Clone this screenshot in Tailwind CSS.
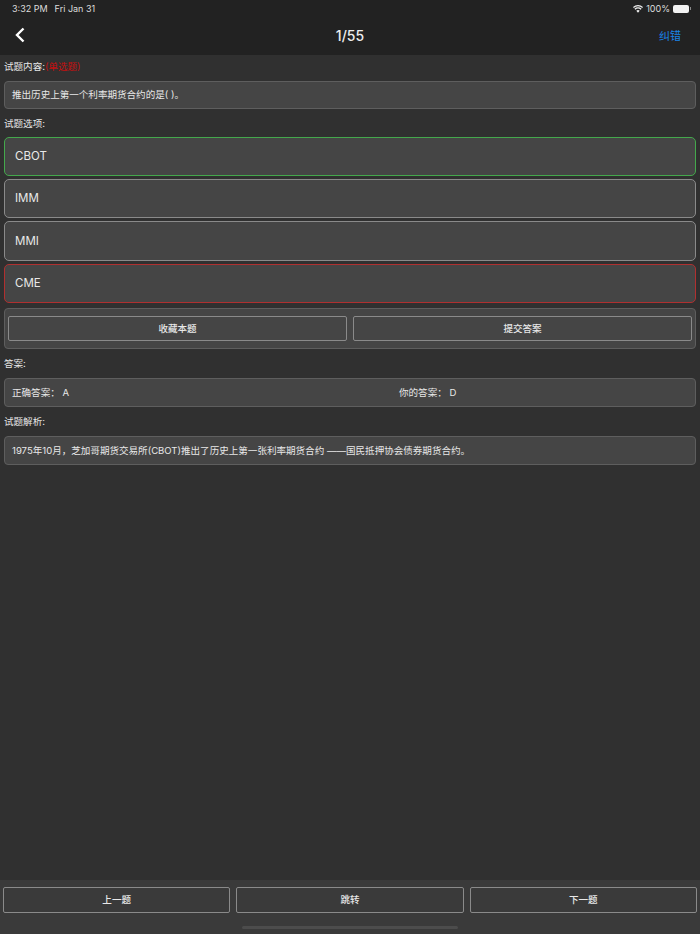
<!DOCTYPE html>
<html lang="zh">
<head>
    <meta charset="UTF-8">
    <meta name="viewport" content="width=device-width, initial-scale=1.0">
    <script src="https://cdn.jsdelivr.net/npm/@tailwindcss/browser@4"></script>
    <title>试题</title>
</head>
<body class="bg-[#303030]">
<div class="w-[700px] h-[934px] flex flex-col overflow-hidden font-['Inter','Noto_Sans_CJK_SC',sans-serif] text-[#e8e8e8]">

    <!-- top bar -->
    <header class="h-[55px] shrink-0 bg-[#222222]">
        <div class="h-[17px] pl-3 pr-[9px] flex items-center justify-between text-[9px] text-[#dddddd]">
            <div class="flex gap-[7px]"><span>3:32 PM</span><span>Fri Jan 31</span></div>
            <div class="flex items-center gap-[3px]">
                <svg width="10" height="8" viewBox="0 0 20 15" fill="#eeeeee"><path d="M10 15 L6.6 11 A5 5 0 0 1 13.4 11Z M4.8 9 L2.8 6.8 A10.4 10.4 0 0 1 17.2 6.8 L15.2 9 A7.6 7.6 0 0 0 4.8 9Z M1.6 5.4 L0 3.6 A14.6 14.6 0 0 1 20 3.6 L18.4 5.4 A12.4 12.4 0 0 0 1.6 5.4Z"/></svg>
                <span>100%</span>
                <div class="flex items-center">
                    <div class="w-[16px] h-[8px] rounded-[2px] bg-[#f2f2f2]"></div>
                    <div class="w-[1px] h-[3px] bg-[#888888] ml-[1px]"></div>
                </div>
            </div>
        </div>
        <div class="h-[36px] grid grid-cols-3 items-center pl-[14px] pr-[19px]">
            <svg width="11" height="16" viewBox="0 0 11 16" fill="none" stroke="#ffffff" stroke-width="2.4"><path d="M9.5 1.5 L3 8 L9.5 14.5"/></svg>
            <span class="text-[14px] font-medium text-[#eeeeee] text-center ml-[5px]">1/55</span>
            <span class="text-[11px] pt-[2px] text-[#1a84e8] text-right">纠错</span>
        </div>
    </header>

    <!-- content -->
    <main class="flex-1 px-1 text-[9.56px]">
        <p class="h-[26px] pb-[1px] flex items-center">试题内容:<span class="text-[#c40f0f]">(单选题)</span></p>
        <div class="h-[28px] px-[7px] pt-[1px] flex items-center bg-[#454545] border border-[#5e5e5e] rounded-[4px]">推出历史上第一个利率期货合约的是( )。</div>
        <p class="h-[28px] pt-[2px] flex items-center">试题选项:</p>

        <div class="flex flex-col gap-[3px] text-[11.5px]">
            <div class="h-[39px] px-[10px] flex items-center bg-[#454545] border border-[#44a84c] rounded-[5px]">CBOT</div>
            <div class="h-[39px] px-[10px] flex items-center bg-[#454545] border border-[#8a8a8a] rounded-[5px]">IMM</div>
            <div class="h-[40px] px-[10px] pt-[1px] flex items-center bg-[#454545] border border-[#8a8a8a] rounded-[5px]">MMI</div>
            <div class="h-[39px] px-[10px] flex items-center bg-[#454545] border border-[#b03030] rounded-[5px]">CME</div>
        </div>

        <div class="mt-[5px] h-[41px] px-[3px] flex items-center gap-[6px] bg-[#454545] border border-[#5e5e5e] rounded-[4px]">
            <button class="flex-1 h-[25px] pt-[1px] bg-[#454545] border border-[#8a8a8a] rounded-[2px] font-medium">收藏本题</button>
            <button class="flex-1 h-[25px] pt-[1px] bg-[#454545] border border-[#8a8a8a] rounded-[2px] font-medium">提交答案</button>
        </div>

        <p class="h-[29px] pt-[2px] flex items-center">答案:</p>
        <div class="h-[29px] px-[7px] pt-[2px] flex items-center bg-[#454545] border border-[#5e5e5e] rounded-[4px]">
            <span class="w-[387px]">正确答案： A</span>
            <span>你的答案： D</span>
        </div>
        <p class="h-[29px] pt-[2px] flex items-center">试题解析:</p>
        <div class="h-[29px] px-[7px] pt-[1px] flex items-center bg-[#454545] border border-[#5e5e5e] rounded-[4px]">1975年10月，芝加哥期货交易所(CBOT)推出了历史上第一张利率期货合约 ——国民抵押协会债券期货合约。</div>
    </main>

    <!-- bottom bar -->
    <footer class="h-[54px] shrink-0 bg-[#3a3a3a] px-[3px] pt-[7px] relative">
        <div class="flex gap-[6px] text-[9.56px] font-medium">
            <button class="flex-1 h-[26px] border border-[#8a8a8a] rounded-[2px]">上一题</button>
            <button class="flex-1 h-[26px] border border-[#8a8a8a] rounded-[2px]">跳转</button>
            <button class="flex-1 h-[26px] border border-[#8a8a8a] rounded-[2px]">下一题</button>
        </div>
        <div class="absolute left-[242px] bottom-[5px] w-[216px] h-[3px] rounded-full bg-[#4c4c4c]"></div>
    </footer>
</div>
</body>
</html>
